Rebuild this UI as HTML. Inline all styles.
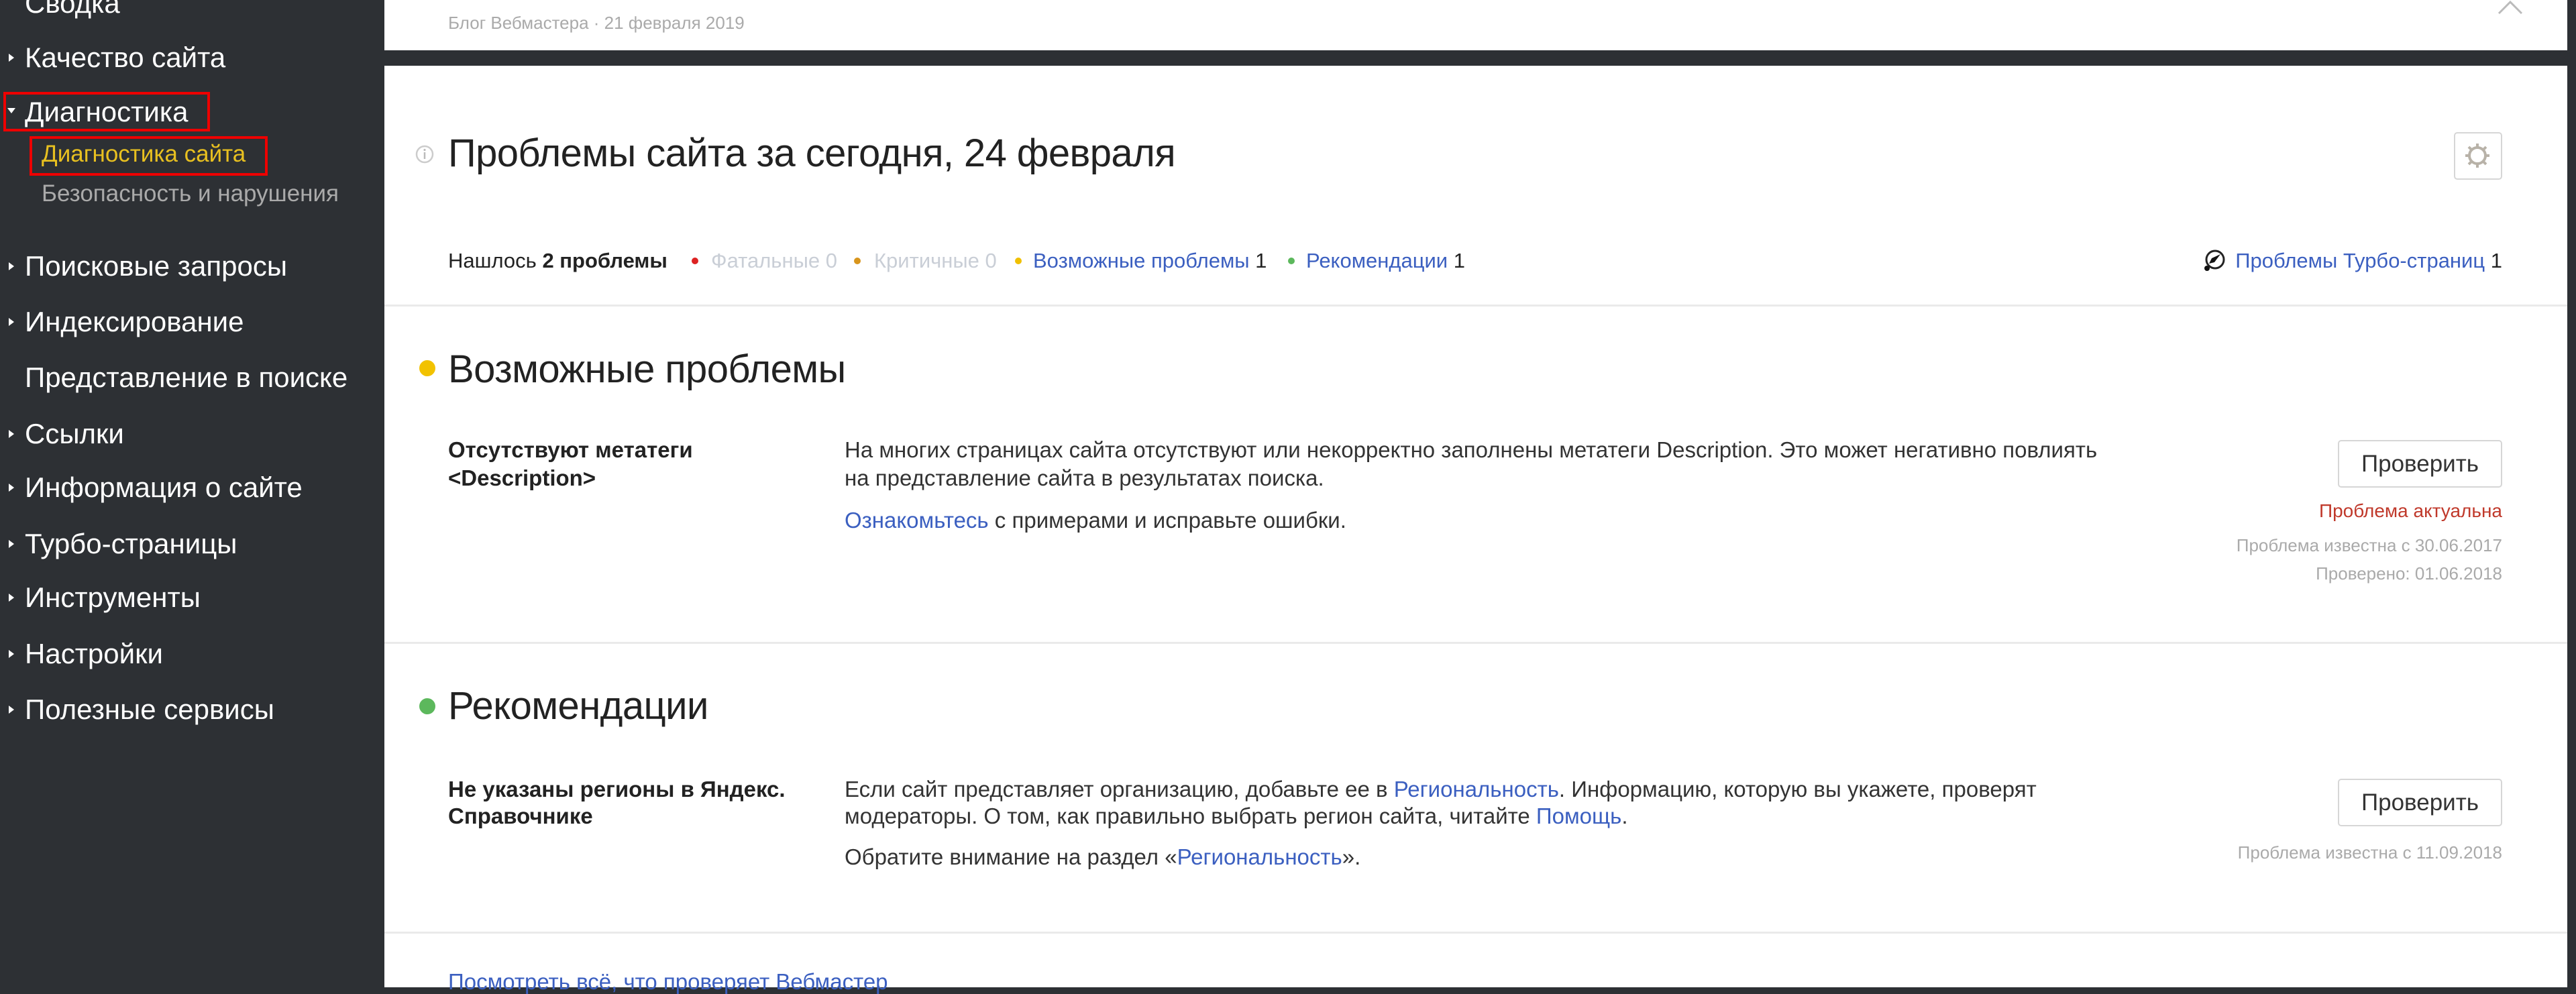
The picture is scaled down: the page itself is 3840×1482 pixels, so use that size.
<!DOCTYPE html>
<html><head><meta charset="utf-8"><style>
html,body{margin:0;padding:0}
body{width:3840px;height:1472px;position:relative;overflow:hidden;background:#2d3034;font-family:"Liberation Sans",Arial,sans-serif}
.t{position:absolute;white-space:nowrap;line-height:1}
.side{color:#fff;font-size:42px;left:37px}
.tri{position:absolute;left:13px;width:0;height:0;border-top:6px solid transparent;border-bottom:6px solid transparent;border-left:8px solid #fff}
.card{position:absolute;background:#fff}
.dot{position:absolute;border-radius:50%}
a{color:#3b5fc0;text-decoration:none}
.btn{position:absolute;border:2px solid #d6d6d6;border-radius:5px;background:#fff;box-sizing:border-box;font-size:35px;color:#333;text-align:center}
.hr{position:absolute;left:573px;width:3254px;height:3px;background:#eaeaea}
.body{font-size:33px;color:#333;line-height:42px}
.sum{font-size:31px;top:373px}
</style></head><body>

<div class="card" style="left:573px;top:0;width:3254px;height:75px"></div>
<div class="t" style="left:668px;top:21px;font-size:26px;color:#aaa">Блог Вебмастера · 21 февраля 2019</div>
<svg style="position:absolute;left:3722px;top:0" width="40" height="24"><path d="M3 20 L20 3 L37 20" fill="none" stroke="#bbb" stroke-width="3"/></svg>

<div class="card" style="left:573px;top:98px;width:3254px;height:1374px"></div>

<svg style="position:absolute;left:619px;top:216px" width="28" height="28"><circle cx="14" cy="14" r="12" fill="none" stroke="#ccc" stroke-width="2.5"/><line x1="14" y1="11" x2="14" y2="21" stroke="#bbb" stroke-width="2.5"/><circle cx="14" cy="7.5" r="1.6" fill="#bbb"/></svg>
<div class="t" style="left:668px;top:200px;font-size:58px;color:#222;letter-spacing:-0.6px">Проблемы сайта за сегодня, 24 февраля</div>

<div class="btn" style="left:3658px;top:197px;width:72px;height:71px"></div>
<svg style="position:absolute;left:3671px;top:210px" width="44" height="44"><g fill="none" stroke="#b8b2a8" stroke-width="4"><circle cx="22" cy="22" r="12"/><path d="M22 4v6M22 34v6M4 22h6M34 22h6M9 9l4 4M31 31l4 4M9 35l4-4M31 13l4-4"/></g></svg>

<div class="t sum" style="left:668px;color:#222">Нашлось <b>2 проблемы</b></div>
<div class="dot" style="left:1031px;top:384px;width:10px;height:10px;background:#d22"></div>
<div class="t sum" style="left:1060px;color:#c9ced6">Фатальные 0</div>
<div class="dot" style="left:1273px;top:384px;width:10px;height:10px;background:#d8951c"></div>
<div class="t sum" style="left:1303px;color:#c9ced6">Критичные 0</div>
<div class="dot" style="left:1513px;top:384px;width:10px;height:10px;background:#f0c000"></div>
<div class="t sum" style="left:1540px;color:#222"><a>Возможные проблемы</a> 1</div>
<div class="dot" style="left:1920px;top:384px;width:10px;height:10px;background:#5cb85c"></div>
<div class="t sum" style="left:1947px;color:#222"><a>Рекомендации</a> 1</div>

<svg style="position:absolute;left:3283px;top:371px" width="36" height="36"><circle cx="19" cy="16" r="13" fill="none" stroke="#222" stroke-width="3"/><path d="M27 8 L14 14 L10 22 L18 20 Z" fill="#111"/><circle cx="7" cy="29" r="4" fill="#111"/></svg>
<div class="t sum" style="right:110px;color:#222"><a>Проблемы Турбо-страниц</a> 1</div>

<div class="hr" style="top:454px"></div>

<div class="dot" style="left:625px;top:537px;width:24px;height:24px;background:#f2c200"></div>
<div class="t" style="left:668px;top:522px;font-size:58px;color:#222;letter-spacing:-0.6px">Возможные проблемы</div>
<div class="t body" style="left:668px;top:650px;font-weight:bold;color:#222">Отсутствуют метатеги<br>&lt;Description&gt;</div>
<div class="t body" style="left:1259px;top:650px">На многих страницах сайта отсутствуют или некорректно заполнены метатеги Description. Это может негативно повлиять<br>на представление сайта в результатах поиска.</div>
<div class="t body" style="left:1259px;top:755px"><a>Ознакомьтесь</a> с примерами и исправьте ошибки.</div>
<div class="btn" style="left:3485px;top:656px;width:245px;height:71px;line-height:67px">Проверить</div>
<div class="t" style="right:110px;top:748px;font-size:28px;color:#c0392b">Проблема актуальна</div>
<div class="t" style="right:110px;top:800px;font-size:26px;color:#aaa">Проблема известна с 30.06.2017</div>
<div class="t" style="right:110px;top:842px;font-size:26px;color:#aaa">Проверено: 01.06.2018</div>

<div class="hr" style="top:957px"></div>

<div class="dot" style="left:625px;top:1041px;width:24px;height:24px;background:#5cb85c"></div>
<div class="t" style="left:668px;top:1024px;font-size:58px;color:#222;letter-spacing:-0.6px">Рекомендации</div>
<div class="t body" style="left:668px;top:1157px;line-height:40px;font-weight:bold;color:#222">Не указаны регионы в Яндекс.<br>Справочнике</div>
<div class="t body" style="left:1259px;top:1157px;line-height:40px">Если сайт представляет организацию, добавьте ее в <a>Региональность</a>. Информацию, которую вы укажете, проверят<br>модераторы. О том, как правильно выбрать регион сайта, читайте <a>Помощь</a>.</div>
<div class="t body" style="left:1259px;top:1257px">Обратите внимание на раздел «<a>Региональность</a>».</div>
<div class="btn" style="left:3485px;top:1161px;width:245px;height:71px;line-height:67px">Проверить</div>
<div class="t" style="right:110px;top:1258px;font-size:26px;color:#aaa">Проблема известна с 11.09.2018</div>

<div class="hr" style="top:1389px"></div>
<div class="t" style="left:668px;top:1447px;font-size:33px"><a>Посмотреть всё, что проверяет Вебмастер</a></div>

<div class="t side" style="top:-16px">Сводка</div>
<div class="tri" style="top:80px"></div><div class="t side" style="top:65px">Качество сайта</div>
<div class="tri" style="top:161px;border-left:6px solid transparent;border-right:6px solid transparent;border-top:8px solid #fff;border-bottom:0;left:11px"></div><div class="t side" style="top:146px">Диагностика</div>
<div style="position:absolute;left:5px;top:137px;width:300px;height:51px;border:4px solid #e00"></div>
<div class="t" style="left:62px;top:212px;font-size:35px;color:#e8c020">Диагностика сайта</div>
<div style="position:absolute;left:44px;top:203px;width:347px;height:51px;border:4px solid #e00"></div>
<div class="t" style="left:62px;top:271px;font-size:35px;color:#aaa">Безопасность и нарушения</div>
<div class="tri" style="top:391px"></div><div class="t side" style="top:376px">Поисковые запросы</div>
<div class="tri" style="top:474px"></div><div class="t side" style="top:459px">Индексирование</div>
<div class="t side" style="top:542px">Представление в поиске</div>
<div class="tri" style="top:641px"></div><div class="t side" style="top:626px">Ссылки</div>
<div class="tri" style="top:721px"></div><div class="t side" style="top:706px">Информация о сайте</div>
<div class="tri" style="top:805px"></div><div class="t side" style="top:790px">Турбо-страницы</div>
<div class="tri" style="top:885px"></div><div class="t side" style="top:870px">Инструменты</div>
<div class="tri" style="top:969px"></div><div class="t side" style="top:954px">Настройки</div>
<div class="tri" style="top:1052px"></div><div class="t side" style="top:1037px">Полезные сервисы</div>
</body></html>
